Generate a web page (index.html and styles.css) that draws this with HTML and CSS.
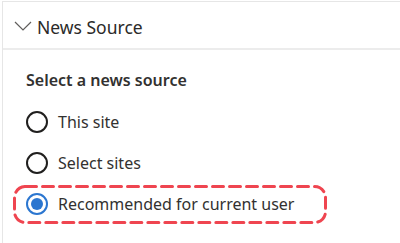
FILE: index.html
```html
<!DOCTYPE html>
<html>
<head>
    <title>News Source</title>
    <meta name="viewport" content="width=device-width, initial-scale=1.0">
    <link rel="stylesheet" href="styles.css">
</head>
<body>
    <div class="panel">
        <div class="panel-header">
            <svg class="chevron" width="18" height="10" viewBox="0 0 18 10">
                <path d="M1 1 L9 9 L17 1" fill="none" stroke="#605e5c" stroke-width="1.2"/>
            </svg>
            <span class="panel-title">News Source</span>
        </div>

        <div class="panel-body">
            <div class="group-label">Select a news source</div>

            <label class="option">
                <span class="radio"></span>
                <span class="option-text">This site</span>
            </label>
            <label class="option">
                <span class="radio"></span>
                <span class="option-text">Select sites</span>
            </label>
            <label class="option option-highlight">
                <span class="radio checked"></span>
                <span class="option-text">Recommended for current user</span>
                <!-- 강조 표시 점선 -->
                <svg class="highlight" width="314" height="39" viewBox="0 0 314 39">
                    <rect x="1.5" y="1.5" width="311" height="36" rx="11" ry="11"
                          fill="none" stroke="#ef4550" stroke-width="3"
                          stroke-dasharray="11 6" stroke-linecap="round"/>
                </svg>
            </label>
        </div>
    </div>
</body>
</html>
```

FILE: styles.css
```css
* {
    margin: 0;
    padding: 0;
    box-sizing: border-box;
}

body {
    background: white;
    font-family: 'Noto Sans', 'Open Sans', sans-serif;
    color: #323130;
    padding: 1px 0 0 2px;
    width: 400px;
    height: 243px;
    overflow: hidden;
}

.panel {
    border-left: 1px solid #e6e6e6;
    border-top: 1px solid #e6e6e6;
    height: 242px;
}

.panel-header {
    height: 48px;
    display: flex;
    align-items: center;
    padding-left: 11px;
    border-bottom: 2px solid #ececec;
}

.chevron {
    margin-top: 1px;
    margin-right: 5px;
}

.panel-title {
    font-size: 17.5px;
    color: #2b2a29;
    margin-top: 3px;
}

.panel-body {
    padding: 19px 0 0 23px;
}

.group-label {
    font-size: 16px;
    font-weight: 600;
    margin-bottom: 10px;
}

.option {
    display: flex;
    align-items: center;
    height: 41px;
    position: relative;
}

.radio {
    width: 22px;
    height: 22px;
    border: 2px solid #201f1e;
    border-radius: 50%;
    margin-right: 10px;
    display: flex;
    align-items: center;
    justify-content: center;
}

.radio.checked {
    border-color: #2b76d0;
}

.radio.checked::after {
    content: '';
    width: 12px;
    height: 12px;
    border-radius: 50%;
    background: #2b76d0;
}

.option-text {
    font-size: 16px;
    color: #323130;
}

.highlight {
    position: absolute;
    left: -13px;
    top: 2px;
}
```
